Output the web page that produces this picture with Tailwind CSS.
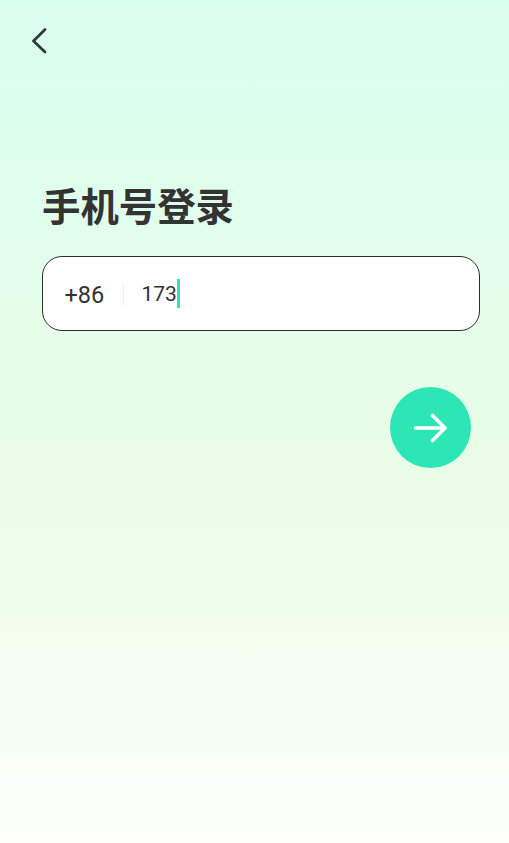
<!DOCTYPE html>
<html lang="zh">
<head>
  <meta charset="UTF-8">
  <title>手机号登录</title>
  <script src="https://cdn.jsdelivr.net/npm/@tailwindcss/browser@4"></script>
</head>
<body class="h-[843px] overflow-hidden bg-gradient-to-b from-[#d9fff0] via-[#ebfde6] via-60% to-[#fcfffb] font-['Roboto','Noto_Sans_CJK_SC',sans-serif] text-[#333333]">
  <div class="pl-[26px] pt-[23px]">
    <svg class="w-[26px] h-[36px]" viewBox="0 0 26 36" fill="none" stroke="#2f3a3a" stroke-width="2.8" stroke-linecap="round" stroke-linejoin="round">
      <path d="M19 6.5 L7.5 18 L19 29"/>
    </svg>
  </div>
  <h1 class="mt-[129px] ml-[42px] text-[38.4px] leading-[40px] font-bold h-[40px]">手机号登录</h1>
  <div class="mt-[28px] ml-[41.5px] w-[438.5px] h-[75px] bg-white border-[1.5px] border-[#2c2c2c] rounded-[20px] flex items-center">
    <span class="w-[80px] pl-[22px] pt-[4px] text-[23.5px] leading-none">+86</span>
    <span class="w-px h-[22px] bg-[#eeeeee]"></span>
    <span class="ml-[18px] pt-[2px] text-[21px] leading-none">173</span>
    <span class="w-[3px] h-[29px] bg-[#2be6b5]"></span>
  </div>
  <div class="mt-[56px] ml-[390px] w-[81px] h-[81px] rounded-full bg-[#2de6b5] flex items-center justify-center">
    <svg class="w-[36px] h-[30px]" viewBox="0 0 36 30" fill="none" stroke="#ffffff" stroke-width="3.6" stroke-linecap="round" stroke-linejoin="round">
      <path d="M2.5 15 H32 M19.5 2.5 L32 15 L19.5 27.5"/>
    </svg>
  </div>
</body>
</html>
